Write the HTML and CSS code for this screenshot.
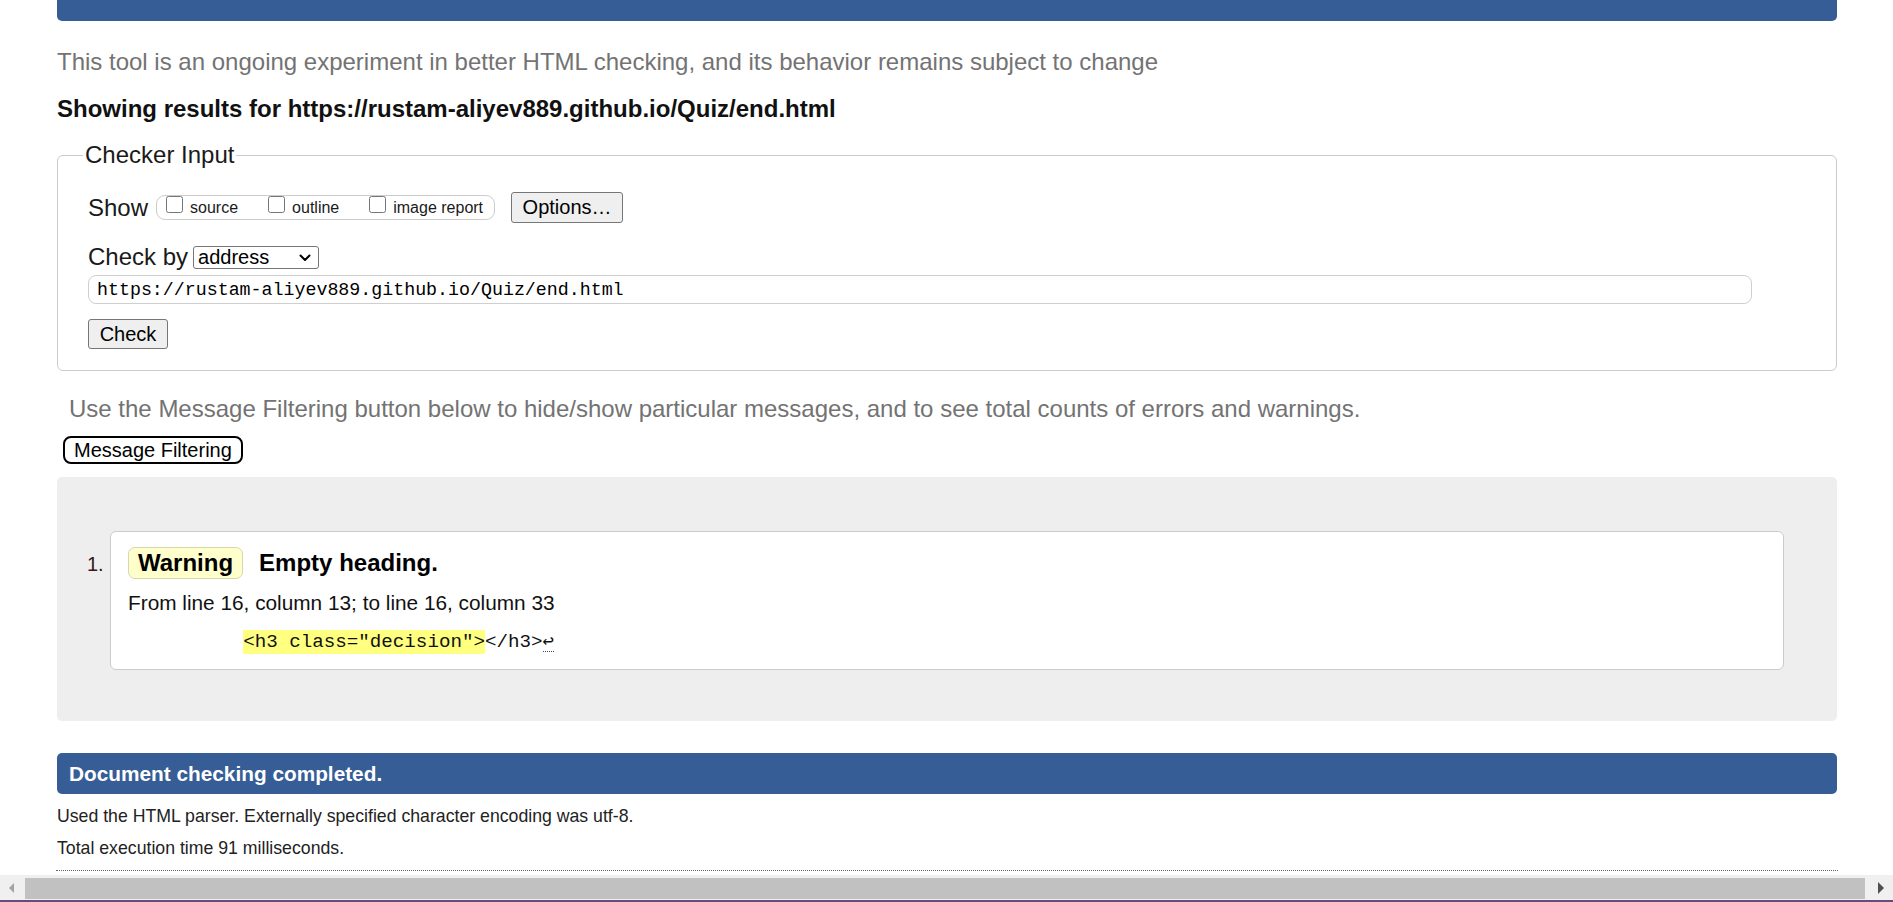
FILE: index.html
```html
<!DOCTYPE html>
<html lang="en">
<head>
<meta charset="utf-8">
<title>Showing results for https://rustam-aliyev889.github.io/Quiz/end.html - Nu Html Checker</title>
<link rel="stylesheet" href="styles.css">
</head>
<body>
<div class="viewport">
  <div class="topbar"></div>
  <p class="intro">This tool is an ongoing experiment in better HTML checking, and its behavior remains subject to change</p>
  <p class="results-for">Showing results for https://rustam-aliyev889.github.io/Quiz/end.html</p>
  <form class="checker" onsubmit="return false">
    <fieldset class="input-set">
      <legend>Checker Input</legend>
      <div class="row show-row">
        <span class="label-lg">Show</span>
        <div class="show-group">
          <label class="opt"><input type="checkbox" class="cb"><span class="opt-text">source</span></label>
          <label class="opt"><input type="checkbox" class="cb"><span class="opt-text">outline</span></label>
          <label class="opt"><input type="checkbox" class="cb"><span class="opt-text">image report</span></label>
        </div>
        <button type="button" class="btn btn-options">Options…</button>
      </div>
      <div class="row by-row">
        <span class="label-lg">Check by</span>
        <span class="select-wrap">
          <select class="by-select"><option>address</option></select>
          <svg class="chev" width="12" height="8" viewBox="0 0 12 8" aria-hidden="true"><path d="M1.5 1.5 L6 6 L10.5 1.5" fill="none" stroke="#000" stroke-width="2" stroke-linecap="round" stroke-linejoin="round"/></svg>
        </span>
      </div>
      <input class="url" type="text" value="https://rustam-aliyev889.github.io/Quiz/end.html">
      <button type="button" class="btn btn-check">Check</button>
    </fieldset>
  </form>
  <p class="filter-note">Use the Message Filtering button below to hide/show particular messages, and to see total counts of errors and warnings.</p>
  <button type="button" class="btn-filter">Message Filtering</button>
  <div class="results">
    <div class="msg">
      <span class="msg-num">1.</span>
      <div class="card">
        <div class="msg-head"><strong class="badge">Warning</strong><span class="msg-title">Empty heading.</span></div>
        <p class="location">From line 16, column 13; to line 16, column 33</p>
        <p class="extract"><code>          <mark class="hl">&lt;h3 class="decision"&gt;</mark>&lt;/h3&gt;<span class="lf">↩</span></code></p>
      </div>
    </div>
  </div>
  <h2 class="done">Document checking completed.</h2>
  <p class="foot">Used the HTML parser. Externally specified character encoding was utf-8.</p>
  <p class="foot foot-2">Total execution time 91 milliseconds.</p>
  <hr class="dots">
</div>
<div class="hscroll">
  <span class="arrow-box left"><span class="arrow arrow-left"></span></span>
  <div class="thumb"></div>
  <span class="arrow-box right"><span class="arrow arrow-right"></span></span>
</div>
</body>
</html>
```

FILE: styles.css
```css
html, body {
  margin: 0;
  padding: 0;
  height: 100%;
}

body {
  display: flex;
  flex-direction: column;
  overflow: hidden;
  background: #fff;
  color: #1a1a1a;
  font-family: "Liberation Sans", Arial, sans-serif;
}

.viewport {
  height: 875px;
  flex: none;
  overflow: hidden;
  padding: 0 56px 0 57px;
  box-sizing: border-box;
}

.topbar {
  height: 21px;
  background: #365d95;
  border-radius: 0 0 5px 5px;
}

.intro {
  margin: 27px 0 0;
  font-size: 24px;
  line-height: 28px;
  color: #737373;
}

.results-for {
  margin: 19px 0 0;
  font-size: 24px;
  line-height: 28px;
  font-weight: bold;
  color: #111;
}

.checker {
  margin: 18px 0 0;
}

.input-set {
  margin: 0;
  border: 1px solid #cccccc;
  border-radius: 6px;
  padding: 23px 30px 21px 30px;
  min-width: 0;
}

.input-set legend {
  font-size: 24px;
  line-height: 28px;
  padding: 0 2px;
  margin-left: -5px;
  color: #1a1a1a;
}

.row {
  display: flex;
  align-items: center;
}

.show-row {
  height: 31px;
}

.label-lg {
  font-size: 24px;
  line-height: 28px;
  color: #1a1a1a;
}

.show-group {
  display: flex;
  align-items: flex-start;
  box-sizing: border-box;
  height: 25px;
  margin-left: 8px;
  padding: 0 11px 0 9px;
  border: 1px solid #cccccc;
  border-radius: 9px;
  gap: 30px;
}

.opt {
  display: flex;
  align-items: flex-start;
  font-size: 16px;
  color: #1a1a1a;
}

.cb {
  width: 17px;
  height: 17px;
  margin: 0 7px 0 0;
}

.opt-text {
  line-height: 18px;
  margin-top: 3px;
}

.btn {
  appearance: none;
  box-sizing: border-box;
  background: #efefef;
  border: 1px solid #767676;
  border-radius: 3px;
  font-family: "Liberation Sans", Arial, sans-serif;
  font-size: 20px;
  color: #000;
  padding: 0;
}

.btn-options {
  width: 112px;
  height: 31px;
  margin-left: 16px;
}

.by-row {
  height: 28px;
  margin-top: 20px;
}

.select-wrap {
  position: relative;
  display: inline-flex;
  margin-left: 5px;
}

.by-select {
  appearance: none;
  box-sizing: border-box;
  width: 126px;
  height: 23px;
  padding: 0 4px;
  font-family: "Liberation Sans", Arial, sans-serif;
  font-size: 20px;
  line-height: 21px;
  color: #000;
  background: #fff;
  border: 1px solid #767676;
  border-radius: 3px;
}

.chev {
  position: absolute;
  right: 8px;
  top: 8px;
  pointer-events: none;
}

.url {
  display: block;
  box-sizing: border-box;
  width: 1664px;
  height: 29px;
  margin: 4px 0 0;
  padding: 0 8px;
  border: 1px solid #cfcfcf;
  border-radius: 8px;
  font-family: "Liberation Mono", "DejaVu Sans Mono", monospace;
  font-size: 18.3px;
  color: #000;
  outline: none;
}

.btn-check {
  display: block;
  width: 80px;
  height: 30px;
  margin-top: 15px;
}

.filter-note {
  margin: 24px 0 0 12px;
  font-size: 24px;
  line-height: 28px;
  color: #737373;
}

.btn-filter {
  display: block;
  box-sizing: border-box;
  height: 28px;
  margin: 13px 0 0 6px;
  padding: 0 9px;
  background: #fff;
  border: 2px solid #000;
  border-radius: 8px;
  font-family: "Liberation Sans", Arial, sans-serif;
  font-size: 20px;
  line-height: 24px;
  color: #000;
}

.results {
  margin-top: 13px;
  height: 244px;
  box-sizing: border-box;
  padding: 54px 53px 51px 30px;
  background: #eeeeee;
  border-radius: 5px;
}

.msg {
  display: flex;
  align-items: flex-start;
}

.msg-num {
  width: 23px;
  flex: none;
  padding-top: 21px;
  font-size: 20px;
  line-height: 24px;
  color: #3a1414;
}

.card {
  flex: 1;
  box-sizing: border-box;
  height: 139px;
  padding: 15px 17px 17px;
  background: #fff;
  border: 1px solid #cccccc;
  border-radius: 6px;
}

.msg-head {
  display: flex;
  align-items: center;
  height: 32px;
}

.badge {
  box-sizing: border-box;
  height: 32px;
  line-height: 30px;
  padding: 0 9px;
  background: #ffffcc;
  border: 1px solid #d6d6b0;
  border-radius: 7px;
  font-size: 24px;
  font-weight: bold;
  color: #000;
}

.msg-title {
  margin-left: 16px;
  font-size: 24px;
  font-weight: bold;
  color: #000;
}

.location {
  margin: 12px 0 0;
  font-size: 20.8px;
  line-height: 24px;
  color: #111;
}

.extract {
  margin: 14px 0 0;
  height: 23px;
  line-height: 23px;
}

.extract code {
  white-space: pre;
  font-family: "Liberation Mono", "DejaVu Sans Mono", monospace;
  font-size: 19.2px;
  color: #111;
}

.hl {
  background: #ffff80;
  color: #111;
  padding: 1px 0;
}

.lf {
  font-family: "DejaVu Sans Mono", monospace;
  font-size: 19px;
  border-bottom: 1px dotted #444;
}

.done {
  margin: 32px 0 0;
  height: 41px;
  line-height: 41px;
  padding-left: 12px;
  background: #365d95;
  border-radius: 5px;
  color: #fff;
  font-size: 20.8px;
  font-weight: bold;
}

.foot {
  margin: 11px 0 0;
  font-size: 17.7px;
  line-height: 22px;
  color: #222;
}

.foot-2 {
  margin-top: 10px;
}

.dots {
  margin: 11px -1px 0;
  height: 0;
  border: 0;
  border-top: 1px dotted #666;
}

.hscroll {
  flex: none;
  display: flex;
  align-items: flex-start;
  height: 25px;
  background: #f0f0f0;
  border-bottom: 2px solid #6a4a7c;
}

.arrow-box {
  display: flex;
  align-items: center;
  justify-content: center;
  height: 25px;
  flex: none;
}

.arrow-box.left {
  width: 25px;
}

.arrow-box.right {
  width: 28px;
}

.arrow {
  width: 0;
  height: 0;
  border-top: 5px solid transparent;
  border-bottom: 5px solid transparent;
}

.arrow-left {
  border-right: 5px solid #a3a3a3;
  margin-left: -2px;
}

.arrow-right {
  border-left: 6px solid #505050;
  margin-left: 3px;
  border-top-width: 6px;
  border-bottom-width: 6px;
}

.thumb {
  flex: 1;
  height: 21px;
  margin-top: 3px;
  background: #c1c1c1;
}
```
